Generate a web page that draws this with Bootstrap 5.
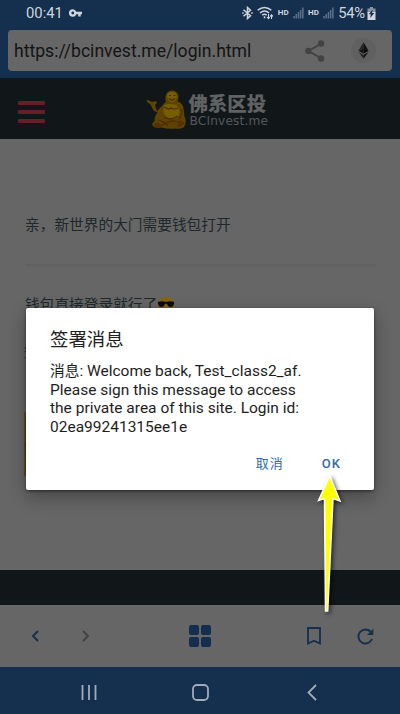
<!DOCTYPE html>
<html lang="zh-CN">
<head>
<meta charset="utf-8">
<meta name="viewport" content="width=device-width, initial-scale=1">
<title>BCInvest</title>
<link href="https://cdn.jsdelivr.net/npm/bootstrap@5.3.0/dist/css/bootstrap.min.css" rel="stylesheet">
<style>
body{font-family:Roboto,"Noto Sans CJK SC",sans-serif;background:#666;color:#1c2123;overflow:hidden}
svg{display:block;flex:none}
.screen{width:400px;height:714px;overflow:hidden}
.navy{background:#152f4e}
.top-area{height:78px}
.status{height:24px;padding:2px 24px 0 26px;color:#d0d5dc;font-size:14.8px;line-height:22px}
.status .pct{margin-left:4px;letter-spacing:-.2px}
.hd{font-size:8px;font-weight:700;letter-spacing:.2px;margin-left:4px}
.key{margin-left:6px}
.sig{margin-left:4px}
.address{height:41px;margin:6px 8px 0;padding:0 16px 0 6px;background:#666;border-radius:4px;color:#141414;font-size:17.6px}
.address span:first-child{padding-top:2px}
.eth{width:25px;height:25px;background:#606060;margin-left:26px}
.site-head{height:61px;background:#111719;padding:0 18px}
.bars{gap:4.5px;margin-top:7px}
.bars i{display:block;width:26.5px;height:4.5px;background:#641f28;border-radius:1px}
.brand{margin-left:101px;margin-top:2px}
.brand-txt{margin-left:1px;padding-top:3px}
.brand-cn{font-size:19.4px;line-height:19px;height:20px;font-weight:800;color:#606263}
.brand-en{font:12.2px/13px "DejaVu Sans","Noto Sans",sans-serif;height:13px;color:#54585a;letter-spacing:.15px;padding-left:1px}
.page{height:431px;padding:74px 24px 0 25px;font-size:14.7px;line-height:24px;color:#20282b}
.page hr{margin:27px 0;border-top:2px solid #5f6062;opacity:1}
.next-line{margin:23px 0 0 -1px}
.thumb{left:24px;top:412px;width:20px;height:64px;background:#5a4522;border:1px solid #6b4d18}
.thumb i{display:block;width:16px;height:18px;margin-top:24px;background:#641d16;border-radius:50%}
.foot{height:35px;background:#111719}
.tools{height:62px;padding:0 26px 0 31px}
.sysnav{height:47px;padding:0 83px 0 81px}
.dialog{left:26px;top:308px;width:348px;height:182px;padding:19px 24px 0;background:#fff;border-radius:2px;box-shadow:0 7px 18px rgba(0,0,0,.32),0 1px 3px rgba(0,0,0,.5)}
.dialog h1{font-size:18.4px;line-height:26px;font-weight:400;color:#202020;margin:0 0 9px}
.dialog p{font-size:15.5px;line-height:18.5px;color:#1d1d1d;margin:0;white-space:nowrap}
.dialog p span{font-size:14.7px}
.dialog .btn{font-size:13px;line-height:20px;font-weight:500;letter-spacing:1px;color:#2e6aa9;padding:0;border:0}
.dialog .btn:first-child{font-weight:400}
.actions{margin-top:18px;gap:38px;padding-right:9px}
.pointer{left:300px;top:464px}
.pointer path{filter:drop-shadow(2px 2px 2px #0009)}
.gap-fwd{margin-left:43px}
.gap-grid{margin-left:99px}
.gap-reload{margin-left:36px}
</style>
<script src="https://cdn.jsdelivr.net/npm/bootstrap@5.3.0/dist/js/bootstrap.bundle.min.js"></script>
</head>
<body>
<div class="screen position-relative d-flex flex-column">
  <header class="top-area navy flex-shrink-0">
    <div class="status d-flex align-items-center">
      <span>00:41</span>
      <svg class="key" width="13" height="8" viewBox="0 0 13 8"><path fill="#d0d5dc" fill-rule="evenodd" d="M3.8.2a3.8 3.8 0 1 0 3.500 5.100h1.900v2.300h2.500V5.300H13V2.700H7.300A3.800 3.800 0 0 0 3.800.2Zm0 2.400a1.400 1.400 0 1 1 0 2.800 1.400 1.400 0 0 1 0-2.800Z"/></svg>
      <svg class="ms-auto" width="11" height="14" viewBox="0 0 11 14" fill="none" stroke="#d0d5dc" stroke-width="1.500"><path d="m1.500 3.800 7 6-3 2.700v-11l3 2.700-7 6"/><path d="M.2 7h1.500M9.200 7h1.500"/></svg>
      <svg class="ms-1" width="17" height="14" viewBox="0 0 17 14" fill="none" stroke="#d0d5dc" stroke-width="1.500"><path d="M.7 4.200Q7.500-1.200 14.300 4.200M3 6.800q4.500-3.600 9 0M5.200 9.100q2.300-1.800 4.500 0"/><path d="M7.500 10.300v2"/><path stroke-width="1.100" d="M11.500 8v4.500m-1.500-1.500 1.500 1.700 1.200-1.700M14.500 13V8.800m-1.400 1.600 1.400-1.600 1.400 1.600"/></svg>
      <span class="hd">HD</span>
      <svg class="sig" width="11" height="12" viewBox="0 0 11 12"><path d="M.3 9h1.500v2.500H.3ZM2.500 7H4v4.500H2.500ZM4.700 5h1.500v6.500H4.700ZM6.900 3h1.500v8.500H6.900ZM9.100.5h1.500v11H9.100Z" fill="#5d708a"/></svg>
      <span class="hd">HD</span>
      <svg class="sig" width="11" height="12" viewBox="0 0 11 12"><path d="M.3 9h1.500v2.500H.3ZM2.500 7H4v4.500H2.500ZM4.700 5h1.500v6.500H4.700ZM6.900 3h1.500v8.500H6.900ZM9.100.5h1.500v11H9.100Z" fill="#5d708a"/></svg>
      <span class="pct">54%</span>
      <svg style="margin-left:2px" width="9" height="13" viewBox="0 0 9 13"><path fill="#8995a5" d="M3 0h3v1.500h2.500V6H.5V1.500H3Z"/><path fill="#d0d5dc" d="M.5 5h8v8h-8Z"/><path fill="#152f4e" d="M5.500 2.500 1.800 7.200h2L3.300 11l3.900-5h-2Z"/></svg>
    </div>
    <div class="address d-flex align-items-center">
      <span>https://bcinvest.me/login.html</span>
      <svg class="ms-auto" width="20" height="22" viewBox="0 0 20 22" fill="#434343"><path d="M16.500 3.500 3.500 11l13 7.500" fill="none" stroke="#434343" stroke-width="2"/><circle cx="16" cy="3.500" r="3.200"/><circle cx="3.300" cy="11" r="3.200"/><circle cx="16" cy="18.500" r="3.200"/></svg>
      <div class="eth rounded-circle d-flex align-items-center justify-content-center"><svg width="11" height="17" viewBox="0 0 12 18"><path fill="#252525" d="M6 0 .5 9.200 6 6.700Z"/><path fill="#101010" d="m6 0 5.500 9.200L6 6.700Z"/><path fill="#161616" d="M.5 9.200 6 6.700v5.800Z"/><path fill="#080808" d="M11.500 9.200 6 6.700v5.800Z"/><path fill="#252525" d="m.5 10.500 5.500 3.300V18Z"/><path fill="#111" d="M11.500 10.500 6 13.800V18Z"/></svg></div>
    </div>
  </header>
  <nav class="site-head d-flex align-items-center flex-shrink-0">
    <div class="bars d-flex flex-column"><i></i><i></i><i></i></div>
    <div class="brand d-flex align-items-center">
      <svg width="42" height="41" viewBox="0 0 42 41">
        <path fill="#5f4300" d="M1 13q-1-3 1-2l4 2 4-1 1 2-2 2 2 6 6-6q1-2 3-3-1-2-.500-6 1-5 6.500-5.500 6 .5 6.500 6 0 3-1 5 5 1 6 7l1 8q3 6-1 11-4 2-8 1-7 1-14-1-7 1-9-2-1-3 2-4 0-6 3-9l-4-2-3-6Z"/>
        <path fill="#745e00" d="M18 16q6-2 12 0 5 4 3 11-4 5-11 2-6-4-4-13ZM21 8q0-5 5-5t5 5q-2 5-5 5t-5-5Z"/>
        <path fill="none" stroke="#4b2b00" stroke-width="1.200" d="M23 9.500q3 3 6 0M23 6.500h2m2.500 0h2M18 18q5 3 7 1 3 2 7 0M18 28q7 4 14-1M12 31q7 2 10 6m-6-.500q9-7 17-3m2-13q2 5-2 9"/>
        <path fill="#573000" d="M8 35q5-4 8 2l-3 2q-6 0-5-4Zm25-3q5-1 5 3-3 4-7 3Z"/>
      </svg>
      <div class="brand-txt"><div class="brand-cn">佛系区投</div><div class="brand-en">BCInvest.me</div></div>
    </div>
  </nav>
  <main class="page flex-shrink-0">
    <div>亲，新世界的大门需要钱包打开</div>
    <hr>
    <div class="d-flex align-items-center"><span>钱包直接登录就行了</span>
      <svg width="18" height="18" viewBox="0 0 18 18"><circle cx="9" cy="9" r="8.300" fill="#846611"/><path fill="#0b0b0d" d="M.7 6q4-1.400 7.300-.3h2q3.500-1.100 7.300.3l-.3 1.500q-.5 3.500-3.500 3.500-2.700 0-3.500-3.300H8Q7.200 11 4.500 11 1.500 11 1 7.500Z"/><path d="M6 14q3 2 6 0" stroke="#382203" fill="none"/></svg>
    </div>
    <div class="next-line">签</div>
  </main>
  <footer class="foot flex-shrink-0"></footer>
  <div class="tools d-flex align-items-center flex-shrink-0">
    <svg width="8" height="12" viewBox="0 0 8 12"><path d="M7 1 2 6l5 5" fill="none" stroke="#152f4e" stroke-width="1.900"/></svg>
    <svg class="gap-fwd" width="8" height="12" viewBox="0 0 8 12"><path d="m1 1 5 5-5 5" fill="none" stroke="#424242" stroke-width="1.900"/></svg>
    <svg class="gap-grid" width="22" height="22" viewBox="0 0 22 22" fill="#152f4e"><rect width="10" height="10" rx="2"/><rect x="12" width="10" height="10" rx="2"/><rect y="12" width="10" height="10" rx="2"/><rect x="12" y="12" width="10" height="10" rx="2"/></svg>
    <svg class="ms-auto" width="14" height="18" viewBox="0 0 14 18"><path d="M1 1h12v15.500l-6-2.700-6 2.700Z" fill="none" stroke="#152f4e" stroke-width="1.800"/></svg>
    <svg class="gap-reload" width="17" height="17" viewBox="0 0 17 17"><path d="M14 4.200A7 7 0 1 0 15 11" fill="none" stroke="#152f4e" stroke-width="1.900"/><path d="M16.300.8v6.300H10Z" fill="#152f4e"/></svg>
  </div>
  <div class="sysnav navy d-flex align-items-center flex-shrink-0 pt-1">
    <svg width="16" height="17" viewBox="0 0 16 17"><path d="M1.500 1v15M8 1v15M14.500 1v15" stroke="#a1acb8" stroke-width="1.800"/></svg>
    <svg class="mx-auto" width="21" height="17" viewBox="0 0 21 17"><rect x="1" y="1" width="15" height="15" rx="4" fill="none" stroke="#a1acb8" stroke-width="1.800"/></svg>
    <svg width="10" height="17" viewBox="0 0 10 17"><path d="m9 1-7.500 7.500L9 16" fill="none" stroke="#a1acb8" stroke-width="1.800"/></svg>
  </div>

  <div class="thumb position-absolute"><i></i></div>
  <section class="dialog position-absolute" role="dialog" aria-modal="true">
    <h1>签署消息</h1>
    <p><span>消息</span>: Welcome back, Test_class2_af.<br>Please sign this message to access<br>the private area of this site. Login id:<br>02ea99241315ee1e</p>
    <div class="actions d-flex justify-content-end"><button class="btn" type="button">取消</button><button class="btn" type="button">OK</button></div>
  </section>
  <svg class="pointer position-absolute" width="60" height="160" viewBox="0 0 60 160"><path d="M29.800 12 40 37 33 34.500 27.700 147h-2.200L24.500 34.500 18.500 36.500Z" fill="#ff0" stroke="#fff" stroke-width="1.500"/></svg>
</div>
</body>
</html>
